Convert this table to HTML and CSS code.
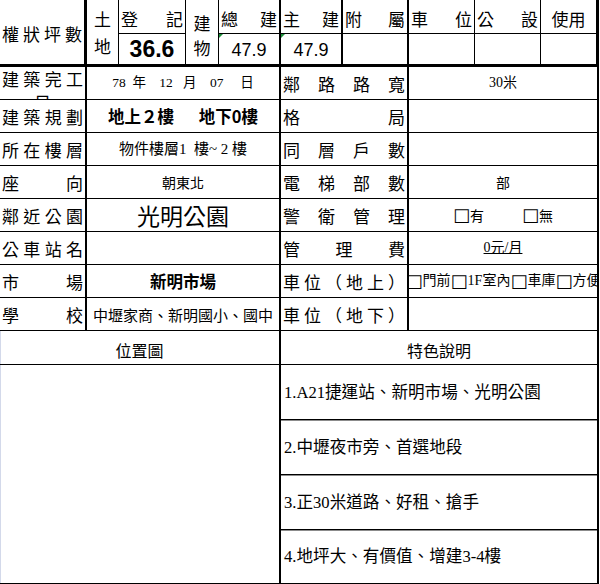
FILE: index.html
```html
<!DOCTYPE html>
<html lang="zh-Hant">
<head>
<meta charset="utf-8">
<title>物件資料</title>
<link rel="stylesheet" href="styles.css">
</head>
<body>
<div class="sheet">
  <!-- header row 1 -->
  <div class="c r2 bt3 br3 title"><span class="dist"><span>權</span><span>狀</span><span>坪</span><span>數</span></span></div>
  <div class="c r2 bt3 br1 vstack land"><span>土</span><span>地</span></div>
  <div class="c br1 hlab"><span class="dist"><span>登</span><span>記</span></span></div>
  <div class="c r2 bt3 br1 vstack bldg"><span>建</span><span>物</span></div>
  <div class="c hlab"><span class="dist"><span>總</span><span>建</span></span></div>
  <div class="c hlab"><span class="dist"><span>主</span><span>建</span></span></div>
  <div class="c hlab"><span class="dist"><span>附</span><span>屬</span></span></div>
  <div class="c br1 hlab"><span class="dist"><span>車</span><span>位</span></span></div>
  <div class="c br1 hlab"><span class="dist"><span>公</span><span>設</span></span></div>
  <div class="c br3 hlab">使用</div>
  <!-- header row 2 -->
  <div class="c br1 bt3 num big">36.6</div>
  <div class="c bt3 num flag">47.9</div>
  <div class="c bt3 num flag">47.9</div>
  <div class="c bt3"></div>
  <div class="c br1 bt3"></div>
  <div class="c br1 bt3"></div>
  <div class="c br3 bt3"></div>

  <!-- body rows -->
  <div class="c lab twoline">
    <span class="dist"><span>建</span><span>築</span><span>完</span><span>工</span></span>
    <span class="line2">日</span>
  </div>
  <div class="c s4 val serif date">78  年    12   月    07     日</div>
  <div class="c s2 lab"><span class="dist"><span>鄰</span><span>路</span><span>路</span><span>寬</span></span></div>
  <div class="c s3 val serif small">30米</div>

  <div class="c lab"><span class="dist"><span>建</span><span>築</span><span>規</span><span>劃</span></span></div>
  <div class="c s4 val bold">地上２樓&emsp;&ensp;地下0樓</div>
  <div class="c s2 lab"><span class="dist"><span>格</span><span>局</span></span></div>
  <div class="c s3 val"></div>

  <div class="c lab"><span class="dist"><span>所</span><span>在</span><span>樓</span><span>層</span></span></div>
  <div class="c s4 val serif floor">物件樓層1  樓~ 2 樓</div>
  <div class="c s2 lab"><span class="dist"><span>同</span><span>層</span><span>戶</span><span>數</span></span></div>
  <div class="c s3 val"></div>

  <div class="c lab"><span class="dist"><span>座</span><span>向</span></span></div>
  <div class="c s4 val small">朝東北</div>
  <div class="c s2 lab"><span class="dist"><span>電</span><span>梯</span><span>部</span><span>數</span></span></div>
  <div class="c s3 val small">部</div>

  <div class="c lab"><span class="dist"><span>鄰</span><span>近</span><span>公</span><span>園</span></span></div>
  <div class="c s4 val large">光明公園</div>
  <div class="c s2 lab"><span class="dist"><span>警</span><span>衛</span><span>管</span><span>理</span></span></div>
  <div class="c s3 val small"><span><span class="box">□</span>有</span><span class="gap"></span><span><span class="box">□</span>無</span></div>

  <div class="c lab"><span class="dist"><span>公</span><span>車</span><span>站</span><span>名</span></span></div>
  <div class="c s4 val"></div>
  <div class="c s2 lab"><span class="dist"><span>管</span><span>理</span><span>費</span></span></div>
  <div class="c s3 val serif small"><span class="ul">0元/月</span></div>

  <div class="c lab"><span class="dist"><span>市</span><span>場</span></span></div>
  <div class="c s4 val bold">新明市場</div>
  <div class="c s2 lab"><span class="dist"><span>車</span><span>位</span><span>（</span><span>地</span><span>上</span><span>）</span></span></div>
  <div class="c s3 val serif tight"><span class="box">□</span>門前<span class="box">□</span>1F室內<span class="box">□</span>車庫<span class="box">□</span>方便</div>

  <div class="c lab"><span class="dist"><span>學</span><span>校</span></span></div>
  <div class="c s4 val school">中壢家商、新明國小、國中</div>
  <div class="c s2 lab"><span class="dist"><span>車</span><span>位</span><span>（</span><span>地</span><span>下</span><span>）</span></span></div>
  <div class="c s3 val"></div>

  <!-- section -->
  <div class="c s5 sect edge">位置圖</div>
  <div class="c s5 sect">特色說明</div>
  <div class="c s5 map edge"></div>
  <div class="c s5 feat serif">1.A21捷運站、新明市場、光明公園</div>
  <div class="c s5 feat serif">2.中壢夜市旁、首選地段</div>
  <div class="c s5 feat serif">3.正30米道路、好租、搶手</div>
  <div class="c s5 feat serif last">4.地坪大、有價值、增建3-4樓</div>
</div>
</body>
</html>
```

FILE: styles.css
```css
html, body {
  margin: 0;
  padding: 0;
  background: #fff;
}

body {
  font-family: "Noto Sans CJK TC", "Noto Sans CJK SC", sans-serif;
  color: #000;
}

.sheet {
  display: grid;
  width: 599px;
  grid-template-columns: 87px 32px 67px 33px 62px 62px 66px 66px 66px 58px;
  grid-template-rows: 34px 33px repeat(8, 33px) 34px 55px 55px 55px 54px;
}

.c {
  box-sizing: border-box;
  min-width: 0;
  overflow: hidden;
  display: flex;
  align-items: center;
  justify-content: center;
  border-right: 2px solid #000;
  border-bottom: 1px solid #000;
  font-size: 17px;
  line-height: 1;
  white-space: nowrap;
}

/* spans */
.r2 { grid-row: span 2; }
.s2 { grid-column: span 2; }
.s3 { grid-column: span 3; }
.s4 { grid-column: span 4; }
.s5 { grid-column: span 5; }

/* border modifiers */
.br1 { border-right-width: 1px; }
.br3 { border-right-width: 3px; }
.bt3 { border-bottom-width: 3px; }

/* distributed label text */
.dist {
  display: flex;
  justify-content: space-between;
  width: 100%;
}

.title {
  padding: 3px 2px 0 2px;
}

.hlab {
  padding: 3px 2px 0 2px;
}

.vstack {
  flex-direction: column;
}

.land span {
  line-height: 27px;
}

.bldg {
  padding-top: 5px;
}

.bldg span {
  line-height: 25px;
}

.num {
  font-family: "Liberation Sans", Arial, sans-serif;
  font-size: 18px;
  padding-top: 1px;
}

.num.big {
  font-size: 23px;
  font-weight: bold;
}

.flag {
  position: relative;
}

.flag::before {
  content: "";
  position: absolute;
  left: 0;
  top: 0;
  border-top: 4px solid #1d8f3a;
  border-right: 4px solid transparent;
}

/* body labels */
.lab {
  padding: 0 2px 0 2px;
}

.twoline {
  flex-direction: column;
  align-items: stretch;
  justify-content: flex-start;
}

.twoline > span {
  line-height: 23px;
}

.line2 {
  text-align: center;
}

/* values */
.val {
  font-size: 16px;
}

.serif {
  font-family: "Liberation Serif", "Noto Sans CJK TC", serif;
}

.small {
  font-size: 14px;
}

.date {
  font-size: 13.5px;
  white-space: pre;
}

.floor {
  font-size: 15px;
  white-space: pre;
}

.bold {
  font-weight: bold;
  font-size: 16.5px;
}

.large {
  font-size: 23px;
}

.school {
  font-size: 15px;
}

.gap {
  display: inline-block;
  width: 38px;
}

.box {
  font-family: "DejaVu Sans", sans-serif;
  font-size: 18px;
  line-height: 1;
  font-weight: normal;
}

.ul {
  text-decoration: underline;
}

.tight {
  font-size: 14px;
  justify-content: center;
}

/* lower section */
.sect {
  font-size: 16px;
  padding-top: 4px;
}

.edge {
  box-shadow: inset 1px 0 0 #d3d9ea;
}

.map {
  grid-row: span 4;
}

.feat {
  justify-content: flex-start;
  padding: 2px 0 0 3px;
  font-size: 16.6px;
  box-shadow: 0 1px 0 #8c8c8c;
}

.feat.last {
  box-shadow: none;
}
```
